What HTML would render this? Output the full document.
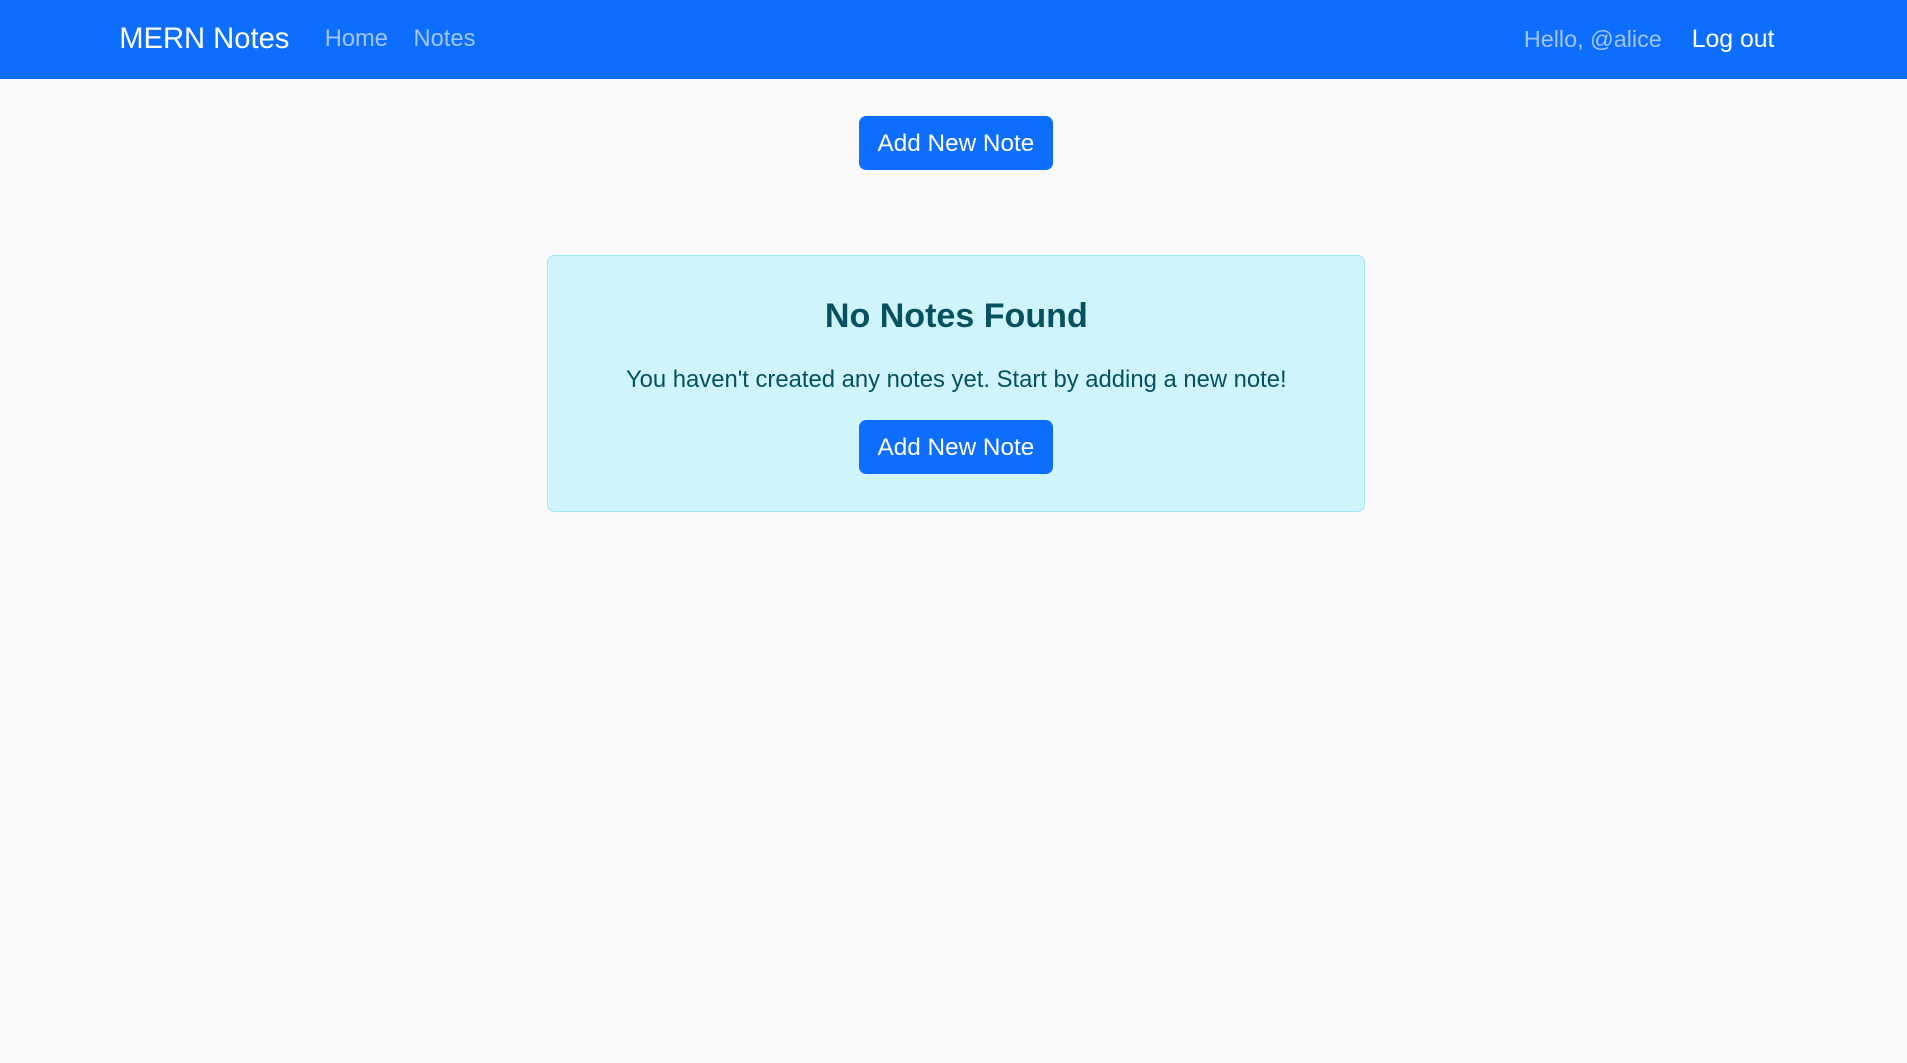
<!DOCTYPE html>
<html><head><meta charset="utf-8"><style>
html,body{margin:0;padding:0;background:#f9f9f9;overflow:hidden}
#w{zoom:1.21620;width:1568px;height:874px;position:relative;font-family:"Liberation Sans",sans-serif;background:#f9f9f9}
.nav{position:absolute;left:0;top:0;width:1568px;height:65px;background:#0d6efd}
.nav span{position:absolute;top:1px;line-height:64px;white-space:nowrap}
.btn{position:absolute;left:706px;width:160px;height:45px;background:#0d6efd;color:#fff;border-radius:6px;font-size:20px;line-height:46px;text-align:center}
.alert{position:absolute;left:450px;top:210px;width:671px;height:209px;background:#cff4fc;border:1px solid #9eeaf9;border-radius:6px;color:#055160;text-align:center}
</style></head><body><div id="w">
<div class="nav">
<span style="left:98px;font-size:24px;color:#fff">MERN Notes</span>
<span style="left:267px;font-size:19.5px;color:rgba(255,255,255,.6)">Home</span>
<span style="left:340px;font-size:19.5px;color:rgba(255,255,255,.6)">Notes</span>
<span style="left:1253px;font-size:19.2px;color:rgba(255,255,255,.6)">Hello, @alice</span>
<span style="left:1391px;font-size:20.4px;color:#fff">Log out</span>
</div>
<div class="btn" style="top:95px">Add New Note</div>
<div class="alert">
<div style="position:absolute;left:0;right:0;top:30px;font-size:28px;font-weight:bold;line-height:38px">No Notes Found</div>
<div style="position:absolute;left:0;right:0;top:89px;font-size:19.6px;line-height:24px">You haven't created any notes yet. Start by adding a new note!</div>
</div>
<div class="btn" style="top:345px">Add New Note</div>
</div></body></html>
